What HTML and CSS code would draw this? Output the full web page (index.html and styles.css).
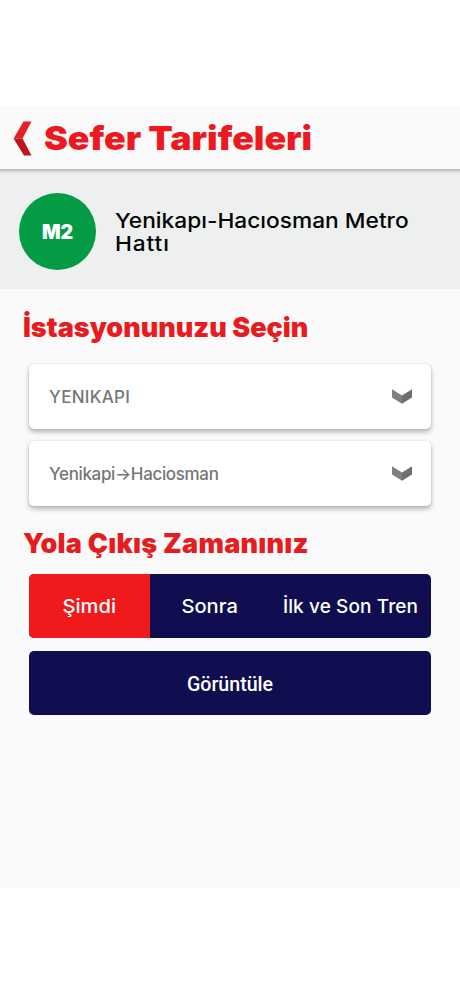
FILE: index.html
```html
<!DOCTYPE html>
<html lang="tr">
<head>
<meta charset="utf-8">
<title>Sefer Tarifeleri</title>
<link rel="stylesheet" href="styles.css">
</head>
<body>
<div class="app">
  <header class="header">
    <svg class="back" viewBox="0 0 19 35" width="19" height="35"><path d="M10.5 0.5H18.5L9.5 17.5H0.5Z" fill="#e52026"/><path d="M0.5 17.5H9.5L18.5 34.5H11Z" fill="#bd151b"/></svg>
    <h1 class="title">Sefer Tarifeleri</h1>
  </header>
  <section class="line">
    <div class="badge">M2</div>
    <p class="line-name">Yenikapı-Hacıosman Metro<br><span class="line-end">Hattı</span></p>
  </section>
  <main class="content">
    <h2 class="heading">İstasyonunuzu Seçin</h2>
    <div class="select station">
      <span>YENIKAPI</span>
      <svg class="chevron" viewBox="0 0 20 15" width="20" height="15"><path d="M0 0.2L10 6.5V14.8L0 8.5Z" fill="#808080"/><path d="M20 0.2L10 6.5V14.8L20 8.5Z" fill="#6f6f6f"/></svg>
    </div>
    <div class="select direction">
      <span>Yenikapi→Haciosman</span>
      <svg class="chevron" viewBox="0 0 20 15" width="20" height="15"><path d="M0 0.2L10 6.5V14.8L0 8.5Z" fill="#808080"/><path d="M20 0.2L10 6.5V14.8L20 8.5Z" fill="#6f6f6f"/></svg>
    </div>
    <h2 class="heading heading-time">Yola Çıkış Zamanınız</h2>
    <div class="tabs">
      <div class="tab active"><span>Şimdi</span></div>
      <div class="tab"><span>Sonra</span></div>
      <div class="tab tab-wide">İlk ve Son Tren</div>
    </div>
    <div class="submit">Görüntüle</div>
  </main>
</div>
</body>
</html>
```
FILE: styles.css
```css
* { box-sizing: border-box; }
body { margin: 0; background: #fff; font-family: Inter, "Liberation Sans", sans-serif; }
h1, h2, p { margin: 0; white-space: nowrap; }
.app { margin-top: 106px; height: 782px; background: #fafafa; }
.header { height: 63px; display: flex; align-items: center; padding: 1px 0 0 13px; }
.title { margin-left: 12px; font-size: 33px; font-weight: 900; line-height: 40px; color: #ee1820; transform: scaleX(1.083); transform-origin: left; }
.line { height: 120px; display: flex; align-items: center; padding: 5px 0 0 19px; background: linear-gradient(#b6b6b6, #d0d1d1 2px, #e7e9e9 4px, #edf0ef 6px); }
.badge { width: 77px; height: 77px; border-radius: 50%; background: #049b45; color: #fff; font-size: 19.5px; font-weight: 900; display: flex; align-items: center; justify-content: center; }
.line-name { margin-left: 19px; font-size: 20.5px; font-weight: 500; line-height: 23px; color: #050505; transform: scaleX(1.108); transform-origin: left; }
.line-end { letter-spacing: .8px; }
.content { padding: 19px 29px 0; }
.heading { margin: 0 0 16px -6px; height: 40px; line-height: 40px; font-size: 27px; font-weight: 900; color: #e61c20; }
.select { height: 65px; margin-bottom: 12px; padding: 0 19px 0 20px; display: flex; align-items: center; justify-content: space-between; background: #fff; border-radius: 5px; color: #767676; font-size: 17px; font-weight: 500; box-shadow: 0 3px 5px rgba(0,0,0,.28), 0 0 2px rgba(0,0,0,.12); }
.station { letter-spacing: .3px; }
.direction { letter-spacing: -.35px; }
.heading-time { margin: 18px 0 10px -6px; letter-spacing: .25px; }
.tabs { height: 64px; display: flex; border-radius: 5px; overflow: hidden; background: #100d50; color: #fff; font-size: 19px; font-weight: 500; }
.tab { width: 120.5px; display: flex; align-items: center; justify-content: center; white-space: nowrap; }
.tab span { transform: scaleX(1.06); }
.tab-wide { flex: 1; letter-spacing: .1px; }
.active { background: #f0191c; }
.submit { height: 64px; margin-top: 13px; padding-top: 2px; border-radius: 5px; background: #100d50; color: #fff; display: flex; align-items: center; justify-content: center; font: 500 19.6px Roboto, sans-serif; }
```
